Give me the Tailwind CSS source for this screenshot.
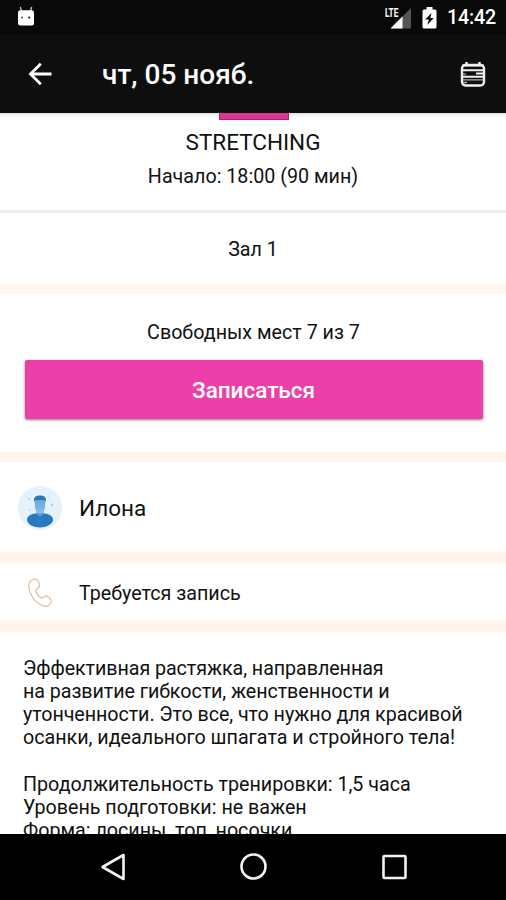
<!DOCTYPE html>
<html lang="ru">
<head>
<meta charset="utf-8">
<title>STRETCHING</title>
<script src="https://cdn.jsdelivr.net/npm/@tailwindcss/browser@4"></script>
</head>
<body class="bg-white text-[#111]" style="font-family: Roboto, 'Noto Sans', sans-serif">
<div class="flex h-[900px] w-[506px] flex-col overflow-hidden">
  <div class="flex h-[35px] shrink-0 items-center bg-[#090909] pr-[10px] pl-[17px] text-white">
    <svg class="mb-[3px] h-[20px] w-[18px]" viewBox="0 0 18 20"><path d="M4.500 5 3.300 1M13.500 5l1.200-4" stroke="#ccc" stroke-width="1.300"/><path d="M1 6.500Q1 4.300 3.500 4.300h11Q17 4.300 17 6.500V17q0 2.500-2.500 2.500h-11Q1 19.500 1 17Z" fill="#fff"/><circle cx="5" cy="11.500" r="1" fill="#555"/><circle cx="12.300" cy="11.500" r="1.100" fill="#111"/></svg>
    <div class="ml-auto flex items-center">
      <div class="relative mr-[10px] h-[22px] w-[27px]">
        <svg class="h-[22px] w-[27px]" viewBox="0 0 27 22"><path d="M5.500 21.500 26 1v20.500Z" fill="#555"/><path d="M5.500 21.500 17.500 9.500v12Z" fill="#fff"/><path d="M0 0h14.500v10.500H0Z" fill="#090909"/></svg>
        <span class="absolute top-0 left-0 origin-left scale-x-[.66] text-[12.500px] leading-[11px] font-bold">LTE</span>
      </div>
      <svg class="mr-[10px] h-[22px] w-[15px]" viewBox="0 0 15 22"><path d="M4.500 0h6v2.500H13q1.500 0 1.500 1.500v16q0 1.500-1.500 1.500H2Q.5 21.500.5 20V4Q.5 2.500 2 2.500h2.500Z" fill="#fff"/><path d="m9.500 6-6.300 6.500h3.600L5.300 18l6.500-7H8.300Z" fill="#111"/></svg>
      <span class="text-[19.700px] leading-none font-medium tracking-[-.2px]">14:42</span>
    </div>
  </div>
  <header class="flex h-[78px] shrink-0 items-center bg-[#0e0e0e] pr-[20px] pl-[28px] text-white">
    <svg class="h-[24px] w-[24px]" viewBox="0 0 24 24" fill="none" stroke="#fff" stroke-width="2.800"><path d="M23.500 12H3M12.800 1.700 2.500 12l10.300 10.300"/></svg>
    <h1 class="mt-[2px] ml-[50px] text-[28px] leading-none font-medium">чт, 05 нояб.</h1>
    <svg class="ml-auto h-[25px] w-[26px]" viewBox="0 0 26 25" fill="none" stroke="#eee"><rect x="2" y="3" width="22" height="20.500" rx="3.500" stroke-width="2.400"/><path d="M6.500 0v4M19.500 0v4" stroke-width="2.400"/><path d="M2 3.500h22M3 8.300h20" stroke-width="2"/><path d="M16 11.500h7M3 14.800h20" stroke-width="2"/><path d="M3 12.200h3M3 17.800h20M3 20.500h4" stroke="#aaa" stroke-width="1.300"/></svg>
  </header>
  <main class="flex h-[721px] shrink-0 flex-col overflow-hidden text-[19.700px] leading-[23.300px]">
    <section class="flex h-[100px] shrink-0 flex-col items-center border-b-[3px] border-[#eeeeee] bg-linear-to-b from-[#e2e2e2] to-white to-[4px]">
      <div class="ml-px h-[7px] w-[70px] border-x border-b border-[#d4107b] bg-[#d93a91]"></div>
      <h2 class="mt-[9px] text-[22.500px] leading-[26px]">STRETCHING</h2>
      <p class="mt-[10px]">Начало: 18:00 (90 мин)</p>
    </section>
    <section class="flex h-[81px] shrink-0 items-center justify-center border-b-[10px] border-[#fff5ec] pt-[2px]">Зал 1</section>
    <section class="flex h-[168px] shrink-0 flex-col items-center border-b-[10px] border-[#fff5ec] pt-[27px]">
      <p class="ml-px">Свободных мест 7 из 7</p>
      <button class="mt-[16px] ml-px h-[59px] w-[458px] rounded-[2px] bg-[#ed3fa8] pt-[2px] text-[22.500px] font-medium text-white shadow-[0_1px_3px_rgba(0,0,0,.5)]">Записаться</button>
    </section>
    <section class="flex h-[101px] shrink-0 items-center border-b-[11px] border-[#fff5ec] pl-[18px]">
      <svg class="mt-px h-[44px] w-[44px]" viewBox="0 0 44 44"><defs><linearGradient id="face" x2="0" y2="1"><stop stop-color="#5c9fd8"/><stop offset="1" stop-color="#8bc2ed"/></linearGradient></defs><circle cx="22" cy="22" r="22" fill="#e5f1fb"/><path d="M9 33.500C9 29 16 27 22 27s13 2 13 6.500S28 41.500 22 41.500 9 38.500 9 33.500Z" fill="#2878bd"/><path d="M18.500 24h7v4.500L22 31l-3.500-2.500Z" fill="#5799d0"/><path d="M16.500 14.500q0-4 5.500-4t5.500 4l-.6 8Q25.500 27.500 22 27.500T17.100 22.500Z" fill="url(#face)"/><path d="M16 15.500c-.5-4 1.700-6 6-6s6.500 2 6 6l-1.500-1.500h-9Z" fill="#2878b9"/><path d="m22 31-1.500 9M22 31l1.500 9" stroke="#347fc1"/><g fill="#aad0ef"><circle cx="11" cy="13" r="1"/><circle cx="34" cy="19" r="1.200"/><circle cx="11.500" cy="24" r=".8"/><circle cx="31" cy="11" r=".6"/></g></svg>
      <span class="mt-[2px] ml-[17px] text-[22.500px] leading-[26px]">Илона</span>
    </section>
    <section class="flex h-[69px] shrink-0 items-center border-b-[12px] border-[#fff5ec] pl-[27px]">
      <svg class="mt-[2px] h-[30px] w-[26px]" viewBox="0 0 26 30" fill="none" stroke="#e3bfa9" stroke-width="1.300" stroke-linejoin="round"><path d="M3 3.500C5 1 8.500.7 10 1.500c1.500 1.500 2.500 4.500 2.500 6.500 0 1.500-3.500 2.500-3.700 4.500 0 2 3.500 6.800 5.700 7.500 1.800.5 3-2.500 4.500-2.200 2 .5 4.500 3 5.200 4.700.5 2-2.200 5.500-4.700 6C14 28 7.500 24 4.500 17.500 2 12.500.5 7 3 3.500Z"/></svg>
      <span class="mt-[5px] ml-[26px]">Требуется запись</span>
    </section>
    <section class="px-[23px] pt-[24.600px] whitespace-nowrap">
      <p><span class="tracking-[-.065px]">Эффективная растяжка, направленная<br>на развитие гибкости, женственности и<br>утонченности. Это все, что нужно для красивой</span><br>осанки, идеального шпагата и стройного тела!</p>
      <p class="mt-[23px]">Продолжительность тренировки: 1,5 часа<br>Уровень подготовки: не важен<br>Форма: лосины, топ, носочки</p>
    </section>
  </main>
  <nav class="flex h-[66px] shrink-0 items-center justify-between bg-black pr-[98px] pl-[99px]">
    <svg class="h-[28px] w-[28px]" viewBox="0 0 28 28" fill="none" stroke="#f2f2f2" stroke-width="2.600" stroke-linejoin="round"><path d="M24.500 2v24L3.500 14Z"/></svg>
    <svg class="h-[28px] w-[28px]" viewBox="0 0 28 28" fill="none" stroke="#f2f2f2" stroke-width="2.600"><circle cx="13.500" cy="13.500" r="12"/></svg>
    <svg class="h-[28px] w-[28px]" viewBox="0 0 28 28" fill="none" stroke="#f2f2f2" stroke-width="2.600"><rect x="3.500" y="3" width="22" height="22" rx="1"/></svg>
  </nav>
</div>
</body>
</html>
